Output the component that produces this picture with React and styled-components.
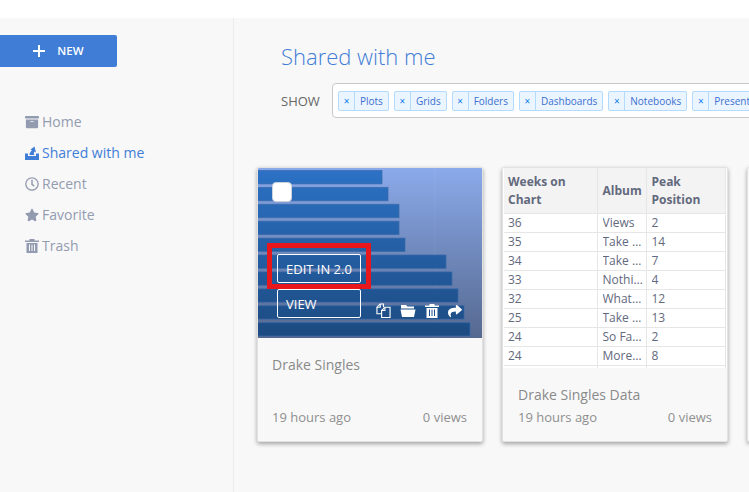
import styled, { createGlobalStyle } from 'styled-components';
import { FaArchive, FaRegClock, FaStar, FaShare } from 'react-icons/fa';

const tags = ['Plots', 'Grids', 'Folders', 'Dashboards', 'Notebooks', 'Presentations'];
const barEnds = [124, 130, 141, 141, 147, 188, 194, 200, 206, 212];
const rows = [
  ['36', 'Views', '2'],
  ['35', 'Take Care', '14'],
  ['34', 'Take Care', '7'],
  ['33', 'Nothing Was', '4'],
  ['32', 'What a Time', '12'],
  ['25', 'Take Care', '13'],
  ['24', 'So Far Gone', '2'],
  ['24', 'More Life', '8'],
  ['', '', ''],
];

function SharedIcon() {
  return (
    <svg width="14" height="15" viewBox="0 0 14 15">
      <path d="M0 8.500h3v2.500h8V8.500h3V15H0z" fill="currentColor" />
      <path d="M9.500 1.500 5.500 4.500 7 5.500C5.500 6.500 4.500 8 4.500 10h5C8.500 8.500 8.700 7.200 9.700 6.500l1.300 1z" fill="currentColor" />
    </svg>
  );
}

function PlusIcon() {
  return (
    <svg width="12" height="12" viewBox="0 0 12 12">
      <path d="M6 0v12M0 6h12" stroke="currentColor" strokeWidth="2" />
    </svg>
  );
}

function TrashIcon() {
  return (
    <svg width="14" height="15" viewBox="0 0 14 15">
      <path d="M4.500 2.500V1h5v1.500H14V4H0V2.500z" fill="currentColor" />
      <path d="M1.500 5h11v10h-11zM4 6.500V13h1V6.500zM6.500 6.500V13h1V6.500zM9 6.500V13h1V6.500z" fill="currentColor" fillRule="evenodd" />
    </svg>
  );
}

function FilesIcon() {
  return (
    <svg width="15" height="15" viewBox="0 0 16 16" fill="none" stroke="currentColor" strokeWidth="1.200">
      <path d="M8 4.500V1H4.500L1 4.500V11.500h5" />
      <path d="M4.500 1v3.500H1" />
      <path d="M6 8 9.500 4.500H15v11H6z" />
      <path d="M9.500 4.500V8H6" />
    </svg>
  );
}

function FolderIcon() {
  return (
    <svg width="16" height="15" viewBox="0 0 16 15">
      <path d="M1 2h5l1.500 1.500H14V5.500H1z" fill="currentColor" />
      <path d="M0.500 6.500h15L14 14H2z" fill="currentColor" />
    </svg>
  );
}

function BarChart() {
  return (
    <ChartSvg viewBox="0 0 224 170">
      <defs>
        <linearGradient id="bars" gradientUnits="userSpaceOnUse" x1="0" y1="0" x2="0" y2="170">
          <stop offset="0" stopColor="#2c72c6" />
          <stop offset="1" stopColor="#1c4a80" />
        </linearGradient>
        <linearGradient id="sky" x1="0" y1="0" x2="0" y2="1">
          <stop offset="0" stopColor="#8baaea" />
          <stop offset="1" stopColor="#55688f" />
        </linearGradient>
      </defs>
      <rect width="224" height="170" fill="url(#sky)" />
      <path d="M177 0v170" stroke="#ffffff" strokeOpacity="0.06" />
      {barEnds.map((end, i) => (
        <rect key={i} x="-1" y={2.5 + i * 16.9} width={end + 1} height="13.400" fill="url(#bars)" stroke="#3a69a8" strokeOpacity="0.7" />
      ))}
    </ChartSvg>
  );
}

export default function App() {
  return (
    <>
      <Global />
      <TopStrip />
      <Page>
        <Sidebar>
          <NewButton><PlusIcon />NEW</NewButton>
          <Nav>
            <NavItem><FaArchive size={14} />Home</NavItem>
            <NavItem $active><SharedIcon />Shared with me</NavItem>
            <NavItem><FaRegClock size={14} />Recent</NavItem>
            <NavItem><FaStar size={14} />Favorite</NavItem>
            <NavItem><TrashIcon />Trash</NavItem>
          </Nav>
        </Sidebar>
        <Content>
          <Title>Shared with me</Title>
          <ShowRow>
            <ShowLabel>SHOW</ShowLabel>
            <TagBox>
              {tags.map((t) => (
                <Tag key={t}><TagX>×</TagX><TagName>{t}</TagName></Tag>
              ))}
            </TagBox>
          </ShowRow>
          <Cards>
            <Card>
              <Thumb>
                <BarChart />
                <Check />
                <Highlight />
                <ThumbButtons>
                  <ThumbButton>EDIT IN 2.0</ThumbButton>
                  <ThumbButton>VIEW</ThumbButton>
                </ThumbButtons>
                <ThumbIcons>
                  <FilesIcon />
                  <FolderIcon />
                  <TrashIcon />
                  <FaShare size={14} />
                </ThumbIcons>
              </Thumb>
              <CardBody>
                <CardTitle>Drake Singles</CardTitle>
                <CardMeta><span>19 hours ago</span><span>0 views</span></CardMeta>
              </CardBody>
            </Card>
            <Card>
              <TableWrap>
                <DataTable>
                  <thead>
                    <tr><th>Weeks on Chart</th><th>Album</th><th>Peak Position</th></tr>
                  </thead>
                  <tbody>
                    {rows.map((r, i) => (
                      <tr key={i}>{r.map((c, j) => <td key={j}><Cell>{c}</Cell></td>)}</tr>
                    ))}
                  </tbody>
                </DataTable>
              </TableWrap>
              <CardBody $inset>
                <CardTitle>Drake Singles Data</CardTitle>
                <CardMeta><span>19 hours ago</span><span>0 views</span></CardMeta>
              </CardBody>
            </Card>
            <Card />
          </Cards>
        </Content>
      </Page>
    </>
  );
}

const Global = createGlobalStyle`
  html, body {
    margin: 0;
    height: 100%;
    overflow: hidden;
    background: #fff;
    font-family: "Open Sans", "Liberation Sans", sans-serif;
  }
`;

const TopStrip = styled.div`
  height: 18px;
  background: #fff;
`;

const Page = styled.div`
  display: flex;
  height: 474px;
  background: #f8f8f8;
`;

const Sidebar = styled.aside`
  flex: 0 0 233px;
  border-right: 1px solid #ebebeb;
  padding-top: 17px;
`;

const NewButton = styled.button`
  display: flex;
  align-items: center;
  justify-content: center;
  gap: 12px;
  width: 117px;
  height: 32px;
  padding: 0 0 1px;
  border: none;
  border-radius: 0 2px 2px 0;
  background: #3f7dd6;
  color: #fff;
  font: 600 11.500px "Open Sans", sans-serif;
`;

const Nav = styled.nav`
  display: flex;
  flex-direction: column;
  margin: 39px 0 0 25px;
`;

const NavItem = styled.div`
  display: flex;
  align-items: center;
  gap: 3px;
  height: 31px;
  font-size: 14px;
  color: ${(p) => (p.$active ? '#3f7dd6' : '#939bb0')};
`;

const Content = styled.main`
  flex: 1;
  min-width: 0;
  overflow: hidden;
`;

const Title = styled.h1`
  margin: 23px 0 0 47px;
  font-size: 22px;
  font-weight: 300;
  line-height: 30px;
  color: #3f7dd6;
`;

const ShowRow = styled.div`
  display: flex;
  align-items: center;
  margin: 12px 0 0 47px;
`;

const ShowLabel = styled.span`
  flex: 0 0 51px;
  font-size: 13px;
  color: #666;
`;

const TagBox = styled.div`
  display: flex;
  flex-shrink: 0;
  gap: 5px;
  box-sizing: border-box;
  height: 35px;
  width: 520px;
  padding: 7px 5px;
  background: #fff;
  border: 1px solid #c8c8c8;
  border-radius: 4px;
`;

const Tag = styled.div`
  display: flex;
  align-items: stretch;
  height: 20px;
  box-sizing: border-box;
  flex-shrink: 0;
  background: #ebf5ff;
  border: 1px solid #b3dbff;
  border-radius: 2px;
  color: #0a7bea;
  font-size: 10px;
`;

const TagX = styled.span`
  display: flex;
  align-items: center;
  justify-content: center;
  box-sizing: border-box;
  width: 16px;
  border-right: 1px solid #b3dbff;
`;

const TagName = styled.span`
  display: flex;
  align-items: center;
  padding: 0 5px;
  color: #3b6fd0;
`;

const Cards = styled.div`
  display: flex;
  gap: 19px;
  margin: 49px 0 0 23px;
`;

const Card = styled.article`
  display: flex;
  flex-direction: column;
  flex: 0 0 226px;
  box-sizing: border-box;
  height: 275px;
  background: #f8f8f8;
  border: 1px solid #e2e2e2;
  border-radius: 2px;
  box-shadow: 0 2px 4px rgba(0, 0, 0, 0.35);
  overflow: hidden;
`;

const Thumb = styled.div`
  position: relative;
  height: 170px;
  flex-shrink: 0;
`;

const ChartSvg = styled.svg`
  display: block;
  width: 100%;
  height: 100%;
`;

const Check = styled.div`
  position: absolute;
  left: 14px;
  top: 14px;
  width: 20px;
  height: 20px;
  box-sizing: border-box;
  background: #fff;
  border: 1px solid #c9d2de;
  border-radius: 4px;
`;

const Highlight = styled.div`
  position: absolute;
  left: 9px;
  top: 75px;
  width: 104px;
  height: 46px;
  box-sizing: border-box;
  border: 5px solid #e8171b;
`;

const ThumbButtons = styled.div`
  position: absolute;
  left: 19px;
  top: 86px;
  display: flex;
  flex-direction: column;
  gap: 6px;
`;

const ThumbButton = styled.div`
  display: flex;
  align-items: center;
  box-sizing: border-box;
  width: 84px;
  height: 29px;
  padding-left: 8px;
  border: 1px solid #fff;
  border-radius: 2px;
  color: #fff;
  font-size: 13px;
`;

const ThumbIcons = styled.div`
  position: absolute;
  left: 118px;
  top: 135px;
  display: flex;
  align-items: center;
  gap: 9px;
  color: #fff;
`;

const CardBody = styled.div`
  flex: 1;
  display: flex;
  flex-direction: column;
  padding: 17px 15px 15px ${(p) => (p.$inset ? '15px' : '14px')};
`;

const CardTitle = styled.div`
  font-size: 14px;
  line-height: 20px;
  color: #8a8a8a;
`;

const CardMeta = styled.div`
  display: flex;
  justify-content: space-between;
  margin-top: auto;
  font-size: 13px;
  line-height: 18px;
  color: #8f8f8f;
`;

const TableWrap = styled.div`
  height: 200px;
  flex-shrink: 0;
  padding: 0 1px;
  overflow: hidden;
  background: #fff;
`;

const DataTable = styled.table`
  width: 222px;
  table-layout: fixed;
  border-collapse: collapse;
  font-size: 12px;
  color: #63697d;

  th, td {
    box-sizing: border-box;
    padding: 0 5px;
    border-right: 1px solid #e6e6e6;
    border-bottom: 1px solid #e6e6e6;
  }
  th {
    height: 45px;
    padding-top: 2px;
    background: #f3f3f3;
    font-weight: 700;
    line-height: 18px;
    text-align: left;
  }
  th:nth-child(1), td:nth-child(1) { width: 93px; padding-left: 4px; }
  th:nth-child(2), td:nth-child(2) { width: 49px; }
  td:nth-child(2) { padding-right: 2px; }
  td {
    height: 19px;
  }
`;

const Cell = styled.div`
  overflow: hidden;
  white-space: nowrap;
  text-overflow: ellipsis;
  line-height: 18px;
`;
